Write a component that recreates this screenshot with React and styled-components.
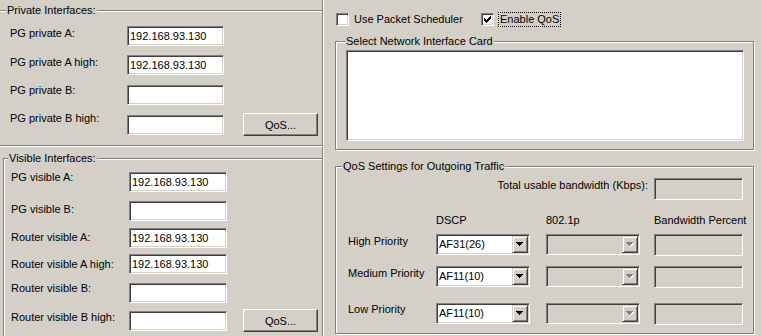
import React from "react";
import styled, { createGlobalStyle } from "styled-components";

const GlobalStyle = createGlobalStyle`
  html, body {
    margin: 0;
    padding: 0;
    background: #d4d0c8;
  }
  body {
    font-family: "Liberation Sans", Arial, sans-serif;
    font-size: 11px;
    color: #000;
  }
`;

const Window = styled.div`
  width: 761px;
  height: 336px;
  overflow: hidden;
  display: flex;
  background: #d4d0c8;
  font-family: "Liberation Sans", Arial, sans-serif;
  font-size: 11px;
  line-height: 13px;
  color: #000;
`;

const LeftPane = styled.div`
  width: 322px;
  flex: none;
  padding-top: 10px;
  border-right: 1px solid #808080;
  display: flex;
  flex-direction: column;
`;

const RightPane = styled.div`
  flex: 1;
  border-left: 1px solid #fff;
  padding-left: 11px;
  display: flex;
  flex-direction: column;
`;

/* etched group box, like a win32 GROUPBOX */
const Group = styled.div`
  position: relative;
  flex: none;
  box-sizing: border-box;
  width: ${p => (p.w ? `${p.w}px` : "auto")};
  height: ${p => p.h}px;
  margin: ${p => p.m};
  padding: ${p => p.pad};
  border: 1px solid #808080;
  box-shadow: inset 1px 1px 0 #fff, 1px 1px 0 #fff;
`;

const Legend = styled.span`
  position: absolute;
  top: -7px;
  left: ${p => p.x}px;
  padding: 0 1px;
  background: #d4d0c8;
  white-space: nowrap;
`;

const FieldRow = styled.div`
  display: flex;
  align-items: flex-start;
  height: 20px;
  margin-top: ${p => p.top}px;
`;

const FieldLabel = styled.span`
  width: ${p => p.w}px;
  flex: none;
  margin-top: ${p => p.dy}px;
  white-space: nowrap;
`;

const Edit = styled.input`
  box-sizing: border-box;
  width: ${p => p.w}px;
  height: ${p => p.h || 20}px;
  margin: 0;
  padding: 0 2px;
  border: 1px solid;
  border-color: #808080 #fff #fff #808080;
  box-shadow: inset 1px 1px 0 #404040, inset -1px -1px 0 #d4d0c8;
  background: ${p => (p.disabled ? "#d4d0c8" : "#fff")};
  font-family: "Liberation Sans", Arial, sans-serif;
  font-size: 11px;
  color: #000;
  outline: none;
`;

const PushButton = styled.button`
  box-sizing: border-box;
  width: 75px;
  height: 23px;
  margin: -2px 0 0 auto;
  padding: 0;
  border: 1px solid;
  border-color: #fff #404040 #404040 #fff;
  box-shadow: inset -1px -1px 0 #808080;
  background: #d4d0c8;
  font-family: "Liberation Sans", Arial, sans-serif;
  font-size: 11px;
  color: #000;
`;

const CheckRow = styled.div`
  display: flex;
  align-items: center;
  height: 17px;
  margin: 11px 0 0 1px;
`;

const CheckItem = styled.div`
  display: flex;
  align-items: center;
  width: ${p => (p.w ? `${p.w}px` : "auto")};
`;

const CheckBox = styled.span`
  box-sizing: border-box;
  width: 13px;
  height: 13px;
  flex: none;
  border: 1px solid;
  border-color: #808080 #fff #fff #808080;
  box-shadow: inset 1px 1px 0 #404040, inset -1px -1px 0 #d4d0c8;
  background: #fff;
  display: flex;
  align-items: center;
  justify-content: center;
`;

const CheckText = styled.span`
  margin-left: ${p => (p.focus ? 4 : 5)}px;
  padding: 1px ${p => (p.focus ? 2 : 0)}px;
  outline: ${p => (p.focus ? "1px dotted #000" : "none")};
  outline-offset: -1px;
  white-space: nowrap;
`;

const ListBox = styled.div`
  box-sizing: border-box;
  width: 398px;
  height: 91px;
  border: 1px solid;
  border-color: #808080 #fff #fff #808080;
  box-shadow: inset 1px 1px 0 #404040, inset -1px -1px 0 #d4d0c8;
  background: #fff;
`;

const QosRow = styled.div`
  display: grid;
  grid-template-columns: 88px 110px 108px 89px;
  align-items: start;
  margin-top: ${p => p.top}px;
`;

const Cell = styled.span`
  grid-column: ${p => p.span || "auto"};
  text-align: ${p => p.align || "left"};
  padding-right: ${p => p.pr || 0}px;
  margin-top: ${p => p.dy || 0}px;
  white-space: nowrap;
`;

const Combo = styled.div`
  box-sizing: border-box;
  width: 94px;
  height: 21px;
  padding: 1px;
  border: 1px solid;
  border-color: #808080 #fff #fff #808080;
  box-shadow: inset 1px 1px 0 #404040, inset -1px -1px 0 #d4d0c8;
  background: ${p => (p.disabled ? "#d4d0c8" : "#fff")};
  display: flex;
  align-items: center;
`;

const ComboText = styled.span`
  flex: 1;
  padding-left: 1px;
  white-space: nowrap;
`;

const DropButton = styled.span`
  box-sizing: border-box;
  width: 16px;
  height: 17px;
  flex: none;
  border: 1px solid;
  border-color: #d4d0c8 #404040 #404040 #d4d0c8;
  box-shadow: inset 1px 1px 0 #fff, inset -1px -1px 0 #808080;
  background: #d4d0c8;
  display: flex;
  align-items: center;
  justify-content: center;
`;

function CheckMark() {
  return (
    <svg width="7" height="7" viewBox="0 0 7 7" shapeRendering="crispEdges">
      <path
        fill="#000"
        d="M6 0h1v1h-1z M5 1h2v1h-2z M0 2h1v1h-1z M4 2h3v1h-3z M0 3h2v1h-2z M3 3h3v1h-3z M0 4h5v1h-5z M1 5h3v1h-3z M2 6h1v1h-1z"
      />
    </svg>
  );
}

function Arrow({ disabled }) {
  return (
    <svg width="8" height="5" viewBox="0 0 8 5" shapeRendering="crispEdges">
      {disabled && <path fill="#fff" d="M1 1h7v1h-7z M2 2h5v1h-5z M3 3h3v1h-3z M4 4h1v1h-1z" />}
      <path
        fill={disabled ? "#808080" : "#000"}
        d="M0 0h7v1h-7z M1 1h5v1h-5z M2 2h3v1h-3z M3 3h1v1h-1z"
      />
    </svg>
  );
}

function Check({ label, checked, focus, w }) {
  return (
    <CheckItem w={w}>
      <CheckBox>{checked && <CheckMark />}</CheckBox>
      <CheckText focus={focus}>{label}</CheckText>
    </CheckItem>
  );
}

function ComboBox({ value, disabled }) {
  return (
    <Combo disabled={disabled}>
      <ComboText>{value}</ComboText>
      <DropButton>
        <Arrow disabled={disabled} />
      </DropButton>
    </Combo>
  );
}

const privateFields = [
  { label: "PG private A:", value: "192.168.93.130", top: 15, dy: 1 },
  { label: "PG private A high:", value: "192.168.93.130", top: 9, dy: 1 },
  { label: "PG private B:", value: "", top: 10, dy: -1 },
  { label: "PG private B high:", value: "", top: 10, dy: -3, qos: true },
];

const visibleFields = [
  { label: "PG visible A:", value: "192.168.93.130", top: 13, dy: -1 },
  { label: "PG visible B:", value: "", top: 9, dy: 2 },
  { label: "Router visible A:", value: "192.168.93.130", top: 7, dy: 3 },
  { label: "Router visible A high:", value: "192.168.93.130", top: 6, dy: 4 },
  { label: "Router visible B:", value: "", top: 9, dy: -1 },
  { label: "Router visible B high:", value: "", top: 8, dy: 0, qos: true },
];

const priorities = [
  { label: "High Priority", dscp: "AF31(26)", top: 7, dy: 1 },
  { label: "Medium Priority", dscp: "AF11(10)", top: 10, dy: 1 },
  { label: "Low Priority", dscp: "AF11(10)", top: 15, dy: 0 },
];

function Fields({ items, labelW, inputW }) {
  return items.map(f => (
    <FieldRow key={f.label} top={f.top}>
      <FieldLabel w={labelW} dy={f.dy}>{f.label}</FieldLabel>
      <Edit w={inputW} defaultValue={f.value} readOnly />
      {f.qos && <PushButton>QoS...</PushButton>}
    </FieldRow>
  ));
}

export default function App() {
  return (
    <>
      <GlobalStyle />
      <Window>
        <LeftPane>
          <Group h={136} m="0 -1px 0 -2px" pad="0 4px 0 11px">
            <Legend x={7}>Private Interfaces:</Legend>
            <Fields items={privateFields} labelW={117} inputW={97} />
          </Group>
          <Group h={200} m="12px -1px 0 3px" pad="0 4px 0 7px">
            <Legend x={4}>Visible Interfaces:</Legend>
            <Fields items={visibleFields} labelW={118} inputW={98} />
          </Group>
        </LeftPane>

        <RightPane>
          <CheckRow>
            <Check label="Use Packet Scheduler" w={145} />
            <Check label="Enable QoS" checked focus />
          </CheckRow>

          <Group w={419} h={109} m="13px 0 0 0" pad="8px 0 0 10px">
            <Legend x={9}>Select Network Interface Card</Legend>
            <ListBox />
          </Group>

          <Group w={419} h={168} m="16px 0 0 0" pad="11px 0 0 12px">
            <Legend x={6}>QoS Settings for Outgoing Traffic</Legend>
            <QosRow top={0}>
              <Cell span="1 / 4" align="right" pr={6} dy={1}>
                Total usable bandwidth (Kbps):
              </Cell>
              <Edit w={89} h={22} disabled />
            </QosRow>
            <QosRow top={14}>
              <Cell />
              <Cell>DSCP</Cell>
              <Cell>802.1p</Cell>
              <Cell>Bandwidth Percent</Cell>
            </QosRow>
            {priorities.map(p => (
              <QosRow key={p.label} top={p.top}>
                <Cell dy={p.dy}>{p.label}</Cell>
                <ComboBox value={p.dscp} />
                <ComboBox disabled />
                <Edit w={89} h={22} disabled />
              </QosRow>
            ))}
          </Group>
        </RightPane>
      </Window>
    </>
  );
}
